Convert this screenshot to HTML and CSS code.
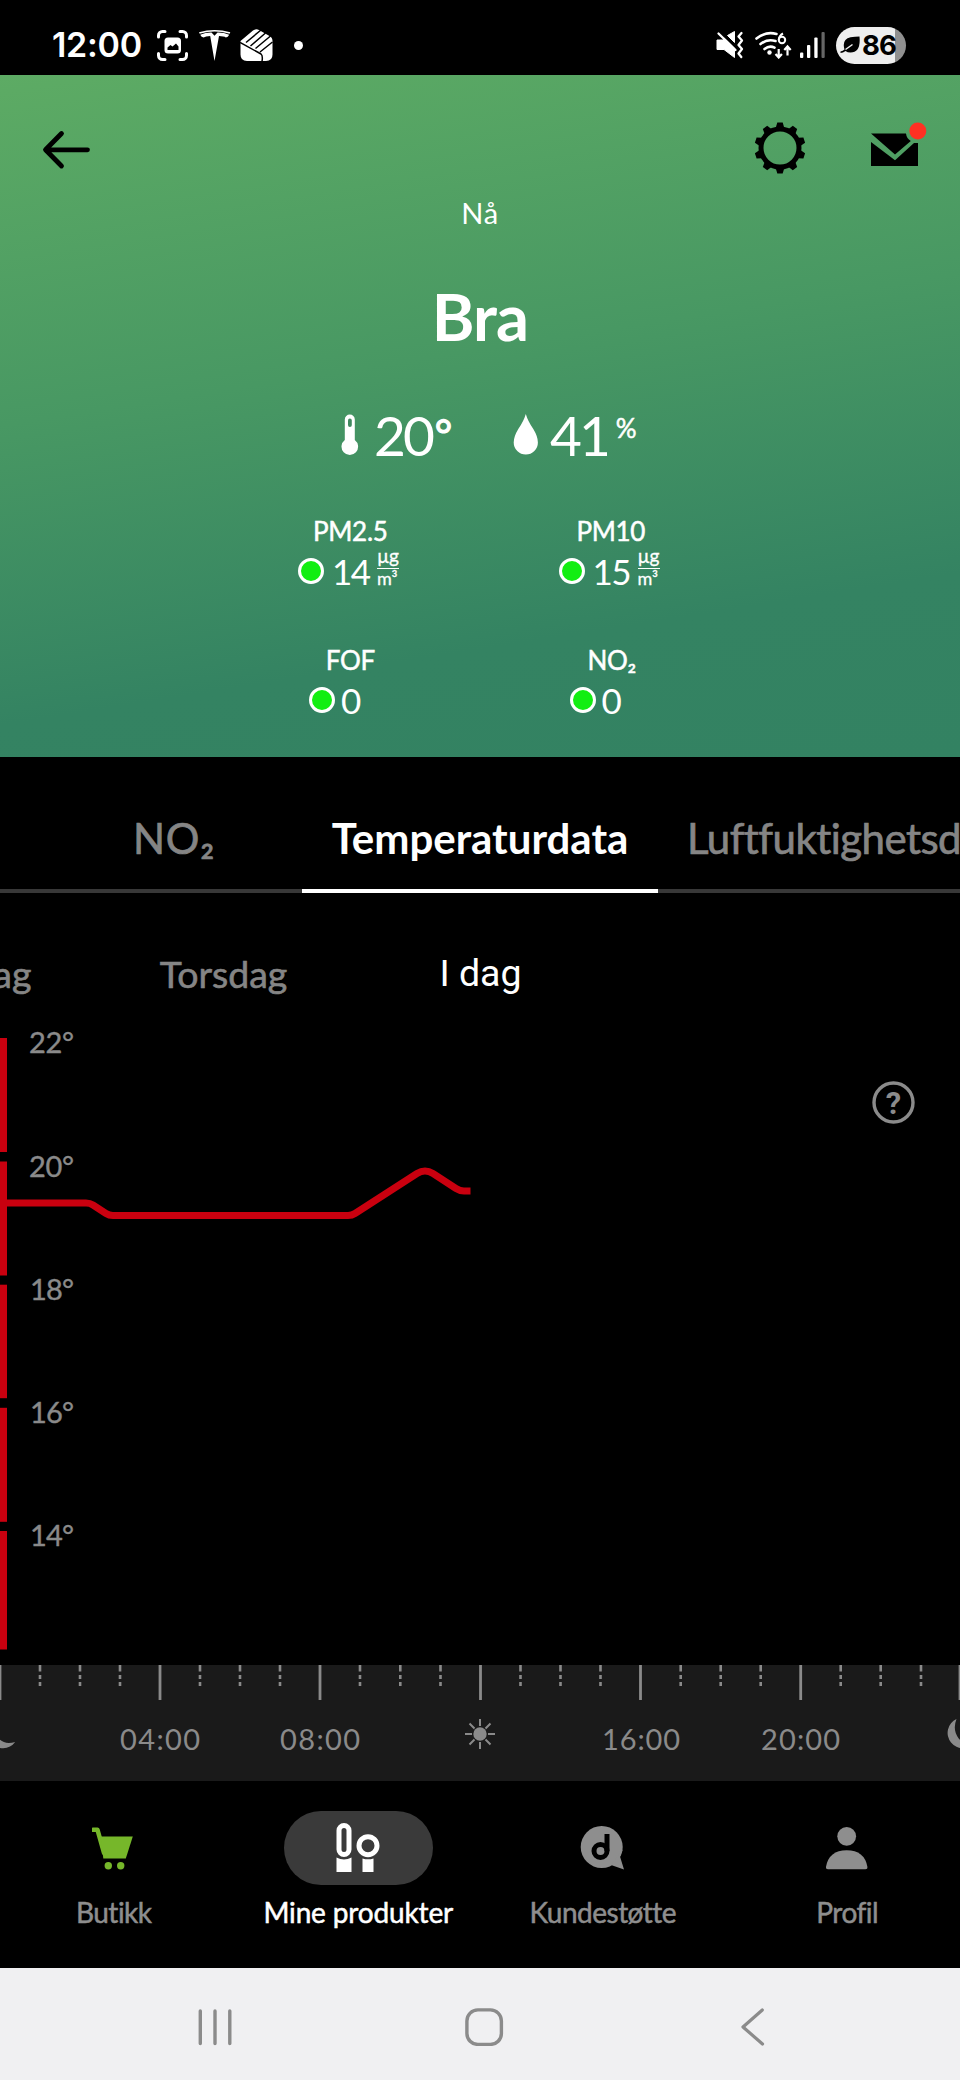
FILE: index.html
```html
<!DOCTYPE html>
<html lang="nb">
<head>
<meta charset="utf-8">
<title>Mine produkter</title>
<link rel="stylesheet" href="styles.css">
</head>
<body>
<div class="phone">
  <header class="status">
    <div class="status-left">
      <span class="clock">12:00</span>
      <svg class="ic-shot" width="33" height="33" viewBox="156 29 33 33">
        <g fill="none" stroke="#fff" stroke-width="3" stroke-linecap="round"><path d="M158.5 37v-1.500a4 4 0 0 1 4-4h2.500M180 31.500h2.500a4 4 0 0 1 4 4V37M186.500 53.500v2a4 4 0 0 1-4 4H180M165 59.500h-2.500a4 4 0 0 1-4-4v-2"/></g>
        <rect x="164.500" y="37.500" width="16.500" height="16" rx="3.500" fill="#fff"/>
        <path d="M167.500 50v-2.500l3-2.500 2 1.500 3.500-3 2.500 3V50z" fill="#000"/>
      </svg>
      <svg class="ic-tesla" width="33" height="33" viewBox="198 29 33 33" fill="#fff">
        <path d="M199 32.200Q214.500 27.600 230.300 32.200l-.6 1.500Q214.500 29.400 199.700 33.700z"/>
        <path d="M200.200 34.700Q206 32.300 211.500 32.500l3 3.200 3-3.200Q223.500 32.300 229.200 34.700 228 37.300 225.800 37.500 224 36 219 36L214.500 61 210.200 36Q205.500 36 203.600 37.500 201.400 37.300 200.200 34.700z"/>
      </svg>
      <svg class="ic-fist" width="34" height="34" viewBox="240 29 34 34">
        <path d="M240.500 42l12.500-10.500q3-2 6-.5l10.500 6q3 1.500 3 5v13.500q0 6.500-6.500 6.500h-19q-6.500 0-6.500-6.500z" fill="#fff"/>
        <g fill="none" stroke="#000" stroke-width="1.500"><path d="M240 43.500l21 11.500q2 1.500 1 7.500M246 43.500l15-12.500M250.500 47l15-13M255.500 49.500l15-12.500M260 53l12.500-10"/></g>
      </svg>
      <span class="more-dot"></span>
    </div>
    <div class="status-right">
      <svg width="28" height="28" viewBox="715 31 28 28">
        <path d="M716 40h5.500l2-1.700 10 10V57.500L723 49.500h-7zM726.500 35.500l7-4v11z" fill="#fff" stroke="#fff" stroke-width="1" stroke-linejoin="round"/>
        <path d="M717.500 33.500l17 16.500" stroke="#fff" stroke-width="2.300" stroke-linecap="round"/>
        <path d="M740.500 33l-3 3.500 3.500 4-3.500 4.500 3.500 4-3.500 4.500 2.800 3.500" fill="none" stroke="#fff" stroke-width="2.300" stroke-linecap="round" stroke-linejoin="round"/>
      </svg>
      <svg class="ic-wifi" width="37" height="28" viewBox="754 31 37 28">
        <g fill="none" stroke="#fff" stroke-width="2.600" stroke-linecap="round"><path d="M755.500 38.500q9.500-7.500 20-4.500M759.500 44q7-5.500 15-3M763.500 49q5-4 10-1.300"/></g>
        <circle cx="768.500" cy="52.500" r="2.200" fill="#fff"/>
        <path d="M782 33.500q-3.800 2-4.300 6.300" fill="none" stroke="#fff" stroke-width="2"/>
        <circle cx="781" cy="40" r="3.200" fill="none" stroke="#fff" stroke-width="2"/>
        <path d="M777.700 49v8M774.500 54l3.200 3.500 3.200-3.500M786.500 55.500v-9M783.300 50l3.200-3.500 3.200 3.500" fill="none" stroke="#fff" stroke-width="2.200"/>
      </svg>
      <svg class="ic-signal" width="26" height="28" viewBox="798 31 26 28">
        <g fill="#fff"><rect x="799" y="52.500" width="3.300" height="5.500" rx="1"/><rect x="806" y="45" width="3.300" height="13" rx="1"/><rect x="813.300" y="37.500" width="3.300" height="20.500" rx="1"/></g><rect x="820.500" y="32" width="3.200" height="26" rx="1" fill="#666"/>
      </svg>
      <div class="battery">
        <svg width="20" height="18" viewBox="838 35 20 18"><path d="M857.500 35.500q1.500 16-9 16-3 0-5-1.500-2.500 2-5 2v-1.500q2.500-.5 4-2-3-10 6-12.200 4.500-.8 9-.8z" fill="#000"/><path d="M843.500 48.500l7-5" stroke="#eee" stroke-width="1.500"/></svg>
        <span>86</span>
      </div>
    </div>
  </header>

  <section class="hero">
    <div class="toolbar">
      <svg width="48" height="40" viewBox="42 130 48 40" fill="none" stroke="#000" stroke-width="4.800" stroke-linecap="round" stroke-linejoin="round"><path d="M61.500 133.500L45.500 149.800l16 16.200M46.500 149.800h41"/></svg>
      <svg class="gear" width="52" height="54" viewBox="-26 -27 52 54">
        <circle r="19" fill="none" stroke="#000" stroke-width="5"/>
        <path id="tooth" d="M-4.300-20L-2.700-25.500h5.400L4.300-20z"/>
        <use href="#tooth" transform="rotate(36)"/><use href="#tooth" transform="rotate(72)"/><use href="#tooth" transform="rotate(108)"/><use href="#tooth" transform="rotate(144)"/><use href="#tooth" transform="rotate(180)"/><use href="#tooth" transform="rotate(216)"/><use href="#tooth" transform="rotate(252)"/><use href="#tooth" transform="rotate(288)"/><use href="#tooth" transform="rotate(324)"/>
      </svg>
      <svg class="mail" width="58" height="46" viewBox="870 121 58 46">
        <path d="M871 133.500h35q.5 5 4.800 7.500L895 154.500zM871 142l24 18.200 19-17.200h4v23h-47z"/>
        <circle cx="917.800" cy="131" r="8.500" fill="#ff3123"/>
      </svg>
    </div>
    <div class="now">Nå</div>
    <h1 class="quality">Bra</h1>
    <div class="climate">
      <svg width="18" height="42" viewBox="341 413 18 42"><path d="M344.800 418.500a5 5 0 0 1 10 0v20.500a8.300 8.300 0 1 1-10 0z" fill="#fff"/><rect x="348" y="417.500" width="3.800" height="8.500" rx="1.900" fill="#40895f"/></svg>
      <span class="big temp">20<span class="deg">°</span></span>
      <svg class="drop" width="26" height="42" viewBox="513 413 26 42"><path d="M525.800 413q2 7 7.500 15 4.600 7.500 4.600 13.500a12 12 0 0 1-24.200 0q0-6 4.600-13.500 5.500-8 7.500-15z" fill="#fff"/></svg>
      <span class="big hum">41</span><span class="pct">%</span>
    </div>
    <div class="metrics">
      <div class="metric"><div class="m-label">PM2.5</div><div class="m-value"><i class="dot"></i><b class="num">14</b><span class="unit"><span>µg</span><span>m³</span></span></div></div>
      <div class="metric"><div class="m-label">PM10</div><div class="m-value"><i class="dot"></i><b class="num">15</b><span class="unit"><span>µg</span><span>m³</span></span></div></div>
      <div class="metric"><div class="m-label">FOF</div><div class="m-value single"><i class="dot"></i><b class="num">0</b></div></div>
      <div class="metric"><div class="m-label no2">NO₂</div><div class="m-value single"><i class="dot"></i><b class="num">0</b></div></div>
    </div>
  </section>

  <nav class="tabs">
    <div class="tab tab-no2">NO₂</div>
    <div class="tab tab-active">Temperaturdata</div>
    <div class="tab tab-hum">Luftfuktighetsdata</div>
  </nav>

  <div class="days">
    <div class="day">Onsdag</div>
    <div class="day">Torsdag</div>
    <div class="day today">I dag</div>
  </div>

  <svg class="chart" width="960" height="645" viewBox="0 1020 960 645">
    <g fill="#c9000f">
      <rect x="0" y="1038" width="7" height="114"/><rect x="0" y="1161.500" width="7" height="114"/><rect x="0" y="1284.700" width="7" height="113.500"/><rect x="0" y="1407.800" width="7" height="114"/><rect x="0" y="1531" width="7" height="118.500"/>
    </g>
    <path d="M7 1203H86Q90 1203 93 1205L106 1213.500Q109 1215.500 113 1215.500H348Q352 1215.500 355 1213.500L417 1173.500Q425 1168.500 433 1173.500L456 1188.500Q460 1191 464 1191H470.500" fill="none" stroke="#c9000f" stroke-width="7"/>
    <g class="y-label">
      <text x="29" y="1053.300" textLength="45">22°</text>
      <text x="29" y="1176.600" textLength="45">20°</text>
      <text x="30" y="1299.600" textLength="44">18°</text>
      <text x="30" y="1422.900" textLength="44">16°</text>
      <text x="30" y="1545.900" textLength="44">14°</text>
    </g>
    <circle cx="893.500" cy="1102.500" r="19.500" fill="none" stroke="#8b8b8b" stroke-width="3.400"/>
    <text class="help" x="893.500" y="1114" text-anchor="middle">?</text>
  </svg>

  <svg class="axis" width="960" height="116" viewBox="0 1665 960 116">
    <path d="M0 1665v35M160 1665v35M320 1665v35M480.500 1665v35M640.500 1665v35M800.700 1665v35M960 1665v35" stroke="#8a8a8a" stroke-width="2.800"/>
    <path d="M40 1665v21M80 1665v21M120 1665v21M200 1665v21M240 1665v21M280 1665v21M360 1665v21M400.300 1665v21M440.500 1665v21M520.500 1665v21M560.500 1665v21M600.500 1665v21M680.700 1665v21M720.700 1665v21M760.700 1665v21M840.700 1665v21M880.700 1665v21M921 1665v21" stroke="#8a8a8a" stroke-width="2.600" stroke-dasharray="6.500 3.500 4 3"/>
    <g class="x-label">
      <text x="120" y="1749.500" textLength="80">04:00</text>
      <text x="280" y="1749.500" textLength="80">08:00</text>
      <text x="602" y="1749.500" textLength="78">16:00</text>
      <text x="761" y="1749.500" textLength="79">20:00</text>
    </g>
    <g fill="#8a8a8a">
      <circle cx="480" cy="1734" r="6.700"/>
      <path id="moon" d="M956.500 1719a15.300 15.300 0 1 0 18.700 23q-11 3-16.500-3.500-6.500-8.500-2.200-19.500z"/>
      <use href="#moon" transform="translate(-960 0)"/>
    </g>
    <path d="M480 1719v7M480 1742v7M465 1734h7M488 1734h7M469.500 1723.500l5 5M485.500 1739.500l5 5M490.500 1723.500l-5 5M474.500 1739.500l-5 5" stroke="#8a8a8a" stroke-width="2"/>
  </svg>

  <nav class="bottom">
    <div class="item">
      <div class="icon"><svg width="44" height="44" viewBox="92 1826 44 44"><path d="M93 1829.800h4.500l6.500 23" fill="none" stroke="#76b72a" stroke-width="4.500" stroke-linecap="round" stroke-linejoin="round"/><path d="M100.500 1836.500h32.300l-7 22h-22.500z" fill="#76b72a"/><circle cx="108.300" cy="1865.800" r="3.700" fill="#76b72a"/><circle cx="120.700" cy="1865.800" r="3.700" fill="#76b72a"/></svg></div>
      <span class="cap">Butikk</span>
    </div>
    <div class="item active">
      <div class="icon"><svg width="44" height="52" viewBox="337.500 1823 44 52"><rect x="340.500" y="1826.500" width="10" height="29" rx="5" fill="none" stroke="#fff" stroke-width="5"/><circle cx="369.500" cy="1846.700" r="9" fill="none" stroke="#fff" stroke-width="5"/><path d="M338 1858.500q7.500 4 15 0V1873h-15zM364 1859.500q5.500 1.700 11 0V1873h-11z" fill="#fff"/></svg></div>
      <span class="cap cap-wide">Mine produkter</span>
    </div>
    <div class="item">
      <div class="icon"><svg width="46" height="46" viewBox="579 1825 46 46"><circle cx="600.700" cy="1847" r="21" fill="#8e8e8e"/><path d="M622 1849l-3 7.500 4 13-13-4.500z" fill="#8e8e8e"/><circle cx="599.500" cy="1851" r="6.500" fill="none" stroke="#000" stroke-width="5"/><path d="M606 1834v17" stroke="#000" stroke-width="5"/></svg></div>
      <span class="cap">Kundestøtte</span>
    </div>
    <div class="item">
      <div class="icon"><svg width="44" height="44" viewBox="825 1826.500 44 44"><circle cx="846.700" cy="1836.800" r="9.400" fill="#8e8e8e"/><path d="M828 1869.800q-2.300 0-2-2.500 3-16.500 20.700-16.500t20.700 16.500q.3 2.500-2 2.500z" fill="#8e8e8e"/></svg></div>
      <span class="cap">Profil</span>
    </div>
  </nav>

  <footer class="system">
    <svg width="36" height="38" viewBox="197 2007.500 36 38"><path d="M200.300 2010.500v32.500M215 2010.500v32.500M229.800 2010.500v32.500" stroke="#8b8b8b" stroke-width="3.400" stroke-linecap="round"/></svg>
    <svg width="40" height="38" viewBox="463.500 2007.500 40 38"><rect x="466.400" y="2009.400" width="34.500" height="34.500" rx="11" fill="none" stroke="#8b8b8b" stroke-width="3.400"/></svg>
    <svg width="26" height="40" viewBox="740 2006.500 26 40"><path d="M762.300 2009.500L743 2026.500l19.500 17" fill="none" stroke="#8b8b8b" stroke-width="3.200" stroke-linecap="round" stroke-linejoin="round"/></svg>
  </footer>
</div>
</body>
</html>
```

FILE: styles.css
```css
* { box-sizing: border-box; }
body { margin: 0; background: #000; font-family: Lato, "Open Sans", sans-serif; font-variant-ligatures: none; color: #fff; }
svg { display: block; flex: none; }
.phone { width: 960px; height: 2080px; overflow: hidden; background: #000; display: flex; flex-direction: column; }
.phone > * { flex: none; }

.status { height: 75px; display: flex; justify-content: space-between; padding: 0 54px 0 52px; }
.status-left, .status-right { display: flex; align-items: center; height: 90px; }
.clock { width: 104px; font: 600 34px/40px Inter, sans-serif; letter-spacing: -0.3px; white-space: nowrap; }
.ic-tesla { margin-left: 9px; }
.ic-fist { margin-left: 9px; }
.more-dot { width: 9px; height: 9px; border-radius: 50%; background: #fff; margin-left: 20px; }
.ic-wifi { margin-left: 11px; }
.ic-signal { margin-left: 7px; }
.battery { width: 70px; height: 37px; border-radius: 19px; margin-left: 11px; padding-left: 4px; display: flex; align-items: center; background: linear-gradient(90deg, #eee 59px, #909090 59px); color: #000; font: 700 27.500px/37px Inter, sans-serif; letter-spacing: -0.8px; }
.battery span { margin-left: 2px; }

.hero { height: 682px; background: linear-gradient(171deg, #5dab64 0%, #489863 42%, #348362 78%, #338262 100%); }
.toolbar { height: 115px; display: flex; align-items: flex-start; padding: 0 32px 0 42px; }
.toolbar > :first-child { margin-top: 55px; }
.gear { margin: 46px 0 0 664px; }
.mail { margin: 46px 0 0 64px; }
.now { height: 46px; line-height: 45px; font-size: 29px; text-align: center; letter-spacing: 0.800px; }
.quality { margin: 0; height: 160px; line-height: 160px; font-size: 65px; font-weight: 700; text-align: center; letter-spacing: -0.8px; }
.climate { height: 78px; display: flex; align-items: center; padding-left: 341px; }
.big { font-size: 55px; line-height: 77px; letter-spacing: -3px; }
.temp { width: 90px; margin-left: 15px; white-space: nowrap; }
.deg { font-size: 42px; margin-left: 3px; vertical-align: 6px; line-height: 0; -webkit-text-stroke: 1.200px; }
.drop { margin-left: 49px; margin-right: 11px; }
.pct { font-size: 26px; line-height: 26px; margin: -14px 0 0 8px; -webkit-text-stroke: 0.500px; }
.metrics { display: grid; grid-template-columns: 260.500px 260.500px; grid-template-rows: 129px 129px; padding: 40px 0 0 220px; }
.m-label { height: 35px; line-height: 35px; font-size: 26px; text-align: center; -webkit-text-stroke: 0.500px; letter-spacing: -0.300px; }
.no2 { padding-left: 2px; }
.m-value { height: 44px; display: flex; align-items: center; padding-left: 78px; }
.single { padding-left: 89px; }
.dot { flex: none; width: 26px; height: 26px; border-radius: 50%; border: 3.500px solid #fff; background: #12ee12; }
.num { font-size: 35px; line-height: 44px; font-weight: 400; margin-left: 8px; letter-spacing: -1.500px; width: 45px; }
.single .num { margin-left: 6px; }
.unit { display: flex; flex-direction: column; width: 22px; font-size: 19px; line-height: 16px; margin-top: -6px; letter-spacing: -0.300px; -webkit-text-stroke: 0.300px; }
.unit span:first-child { border-bottom: 1px solid #fff; height: 21px; }
.unit span + span { line-height: 19px; font-size: 18px; }

.tabs { height: 136px; display: flex; padding-left: 46px; box-shadow: inset 0 -4px #383838; font-size: 42px; color: #858585; white-space: nowrap; overflow: hidden; -webkit-text-stroke: 0.700px; }
.tab { flex: none; height: 136px; text-align: center; line-height: 162px; }
.tab-no2 { width: 256px; letter-spacing: 0.800px; }
.tab-active { width: 356px; color: #fff; font-weight: 700; border-bottom: 4px solid #fff; -webkit-text-stroke: 0; }
.tab-hum { padding-left: 29px; letter-spacing: -0.550px; }

.days { height: 127px; display: flex; overflow: hidden; }
.day { flex: none; width: 257px; text-align: center; font-size: 37.500px; line-height: 161px; color: #858585; -webkit-text-stroke: 0.600px; }
.day:first-child { margin-left: -160px; margin-right: -2px; }
.today { font: 400 37.500px/160px Roboto, sans-serif; color: #fff; -webkit-text-stroke: 0; }

.y-label, .x-label { font-size: 29px; fill: #8a8a8a; }
.y-label { stroke: #8a8a8a; stroke-width: 0.400px; }
.help { font: 700 31px Roboto, sans-serif; fill: #8b8b8b; }
.axis { background: #1a1a1a; }

.bottom { height: 187px; display: flex; padding: 30px 0 0; width: 978px; margin-left: -8.500px; }
.item { flex: 1; display: flex; flex-direction: column; align-items: center; color: #8e8e8e; }
.icon { width: 149px; height: 74px; border-radius: 37px; display: flex; align-items: center; justify-content: center; }
.active { color: #fff; }
.active .icon { background: #3a3a3a; }
.cap { font-size: 28px; line-height: 36px; margin-top: 9px; white-space: nowrap; letter-spacing: -0.500px; -webkit-text-stroke: 0.500px; }
.cap-wide { letter-spacing: -0.150px; }

.system { height: 112px; background: #f0f0f2; display: flex; align-items: center; padding: 6px 0 0 197px; }
.system svg + svg { margin-left: 230.500px; }
.system svg:last-child { margin-left: 236.500px; }
```
